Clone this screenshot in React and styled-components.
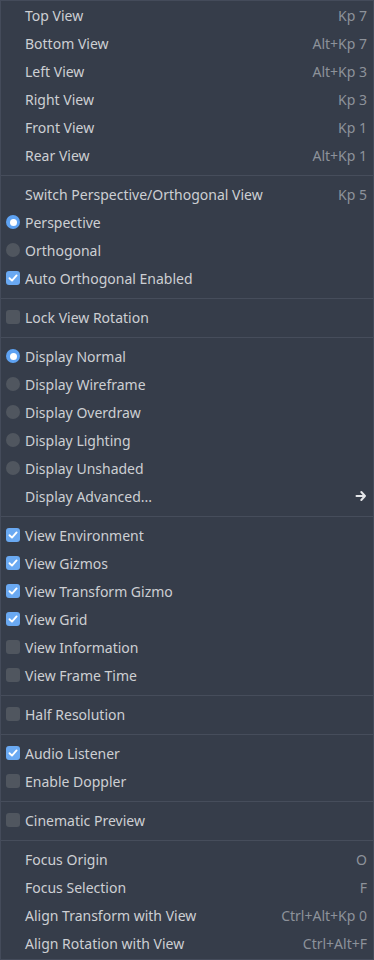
import React from "react";
import styled, { createGlobalStyle } from "styled-components";

const GlobalStyle = createGlobalStyle`
  html, body {
    margin: 0;
    padding: 0;
    background: #363d4a;
  }
  body {
    font-family: "Noto Sans", "Open Sans", sans-serif;
  }
`;

const Panel = styled.div`
  width: 374px;
  height: 960px;
  box-sizing: border-box;
  background: #363d4a;
  border: 1px solid #444b5a;
  padding: 0 0 2px;
  display: flex;
  flex-direction: column;
`;

const Row = styled.div`
  height: 28px;
  display: flex;
  align-items: center;
  padding: 0 6px 0 5px;
  color: #cdcfd3;
  font-size: 14px;
`;

const IconSlot = styled.div`
  width: 19px;
  height: 28px;
  display: flex;
  align-items: center;
  justify-content: flex-start;
`;

const Label = styled.span`
  flex: 1;
  white-space: nowrap;
`;

const Shortcut = styled.span`
  color: #8d929a;
  white-space: nowrap;
`;

const Separator = styled.div`
  height: 11px;
  display: flex;
  align-items: center;
  &::after {
    content: "";
    flex: 1;
    height: 1px;
    margin-top: 2px;
    background: #464d5b;
  }
`;

const Check = styled.div`
  width: 14px;
  height: 14px;
  border-radius: 3px;
  background: ${(p) => (p.on ? "#6aa9f2" : "#50565f")};
  display: flex;
  align-items: center;
  justify-content: center;
`;

const Radio = styled.div`
  width: 14px;
  height: 14px;
  border-radius: 50%;
  background: ${(p) => (p.on ? "#5ea2f2" : "#50565f")};
  display: flex;
  align-items: center;
  justify-content: center;
  &::after {
    content: "";
    display: ${(p) => (p.on ? "block" : "none")};
    width: 7px;
    height: 7px;
    border-radius: 50%;
    background: #ffffff;
  }
`;

const CheckBox = ({ on }) => (
  <Check on={on ? 1 : 0}>
    {on && (
      <svg width="10" height="10" viewBox="0 0 10 10">
        <path d="M1.5 5.2 L4 7.6 L8.6 2.4" fill="none" stroke="#fff" strokeWidth="1.9" strokeLinecap="round" strokeLinejoin="round" />
      </svg>
    )}
  </Check>
);

const Arrow = () => (
  <svg width="12" height="12" viewBox="0 0 12 12">
    <path d="M1.5 6 H10 M6.3 2 L10 6 L6.3 10" fill="none" stroke="#e4e6e9" strokeWidth="2" strokeLinecap="round" strokeLinejoin="round" />
  </svg>
);

const groups = [
  [
    { label: "Top View", key: "Kp 7" },
    { label: "Bottom View", key: "Alt+Kp 7" },
    { label: "Left View", key: "Alt+Kp 3" },
    { label: "Right View", key: "Kp 3" },
    { label: "Front View", key: "Kp 1" },
    { label: "Rear View", key: "Alt+Kp 1" },
  ],
  [
    { label: "Switch Perspective/Orthogonal View", key: "Kp 5" },
    { label: "Perspective", radio: true, on: true },
    { label: "Orthogonal", radio: true },
    { label: "Auto Orthogonal Enabled", check: true, on: true },
  ],
  [{ label: "Lock View Rotation", check: true }],
  [
    { label: "Display Normal", radio: true, on: true },
    { label: "Display Wireframe", radio: true },
    { label: "Display Overdraw", radio: true },
    { label: "Display Lighting", radio: true },
    { label: "Display Unshaded", radio: true },
    { label: "Display Advanced...", submenu: true },
  ],
  [
    { label: "View Environment", check: true, on: true },
    { label: "View Gizmos", check: true, on: true },
    { label: "View Transform Gizmo", check: true, on: true },
    { label: "View Grid", check: true, on: true },
    { label: "View Information", check: true },
    { label: "View Frame Time", check: true },
  ],
  [{ label: "Half Resolution", check: true }],
  [
    { label: "Audio Listener", check: true, on: true },
    { label: "Enable Doppler", check: true },
  ],
  [{ label: "Cinematic Preview", check: true }],
  [
    { label: "Focus Origin", key: "O" },
    { label: "Focus Selection", key: "F" },
    { label: "Align Transform with View", key: "Ctrl+Alt+Kp 0" },
    { label: "Align Rotation with View", key: "Ctrl+Alt+F" },
  ],
];

const MenuItem = ({ item }) => (
  <Row>
    <IconSlot>
      {item.radio && <Radio on={item.on ? 1 : 0} />}
      {item.check && <CheckBox on={item.on} />}
    </IconSlot>
    <Label>{item.label}</Label>
    {item.key && <Shortcut>{item.key}</Shortcut>}
    {item.submenu && <Arrow />}
  </Row>
);

const App = () => {
  return (
    <>
      <GlobalStyle />
      <Panel>
        {groups.map((group, gi) => (
          <React.Fragment key={gi}>
            {gi > 0 && <Separator />}
            {group.map((item) => (
              <MenuItem key={item.label} item={item} />
            ))}
          </React.Fragment>
        ))}
      </Panel>
    </>
  );
};

export default App;
